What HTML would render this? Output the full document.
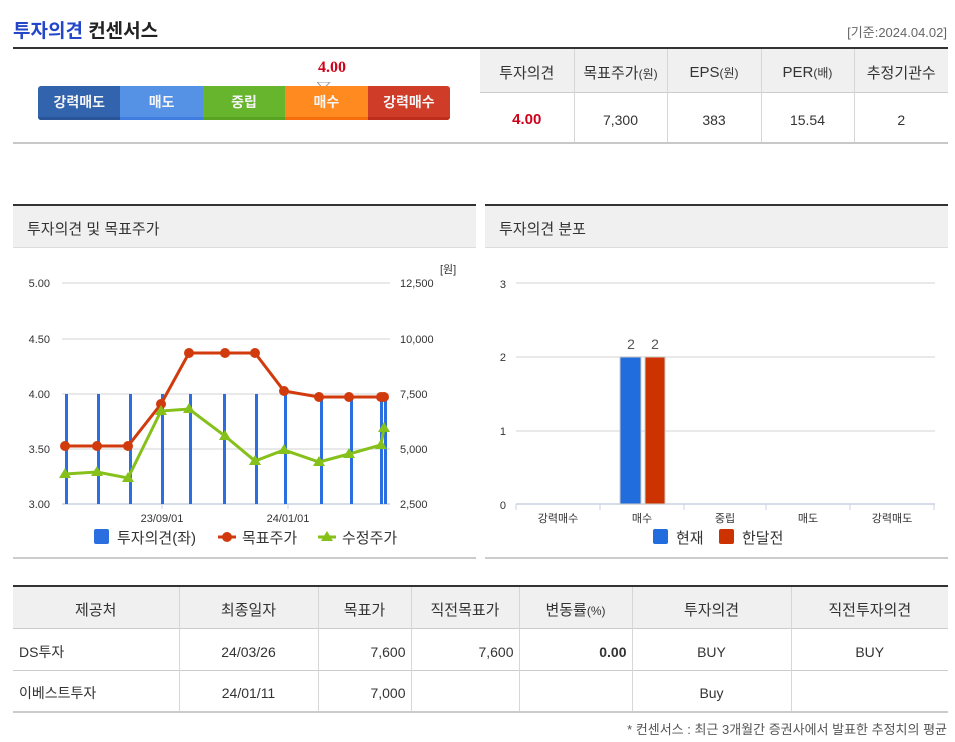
<!DOCTYPE html>
<html><head><meta charset="utf-8"><style>
*{margin:0;padding:0;box-sizing:border-box}
body{width:955px;height:742px;background:#fff;font-family:"Liberation Sans","Noto Sans CJK KR",sans-serif;position:relative;overflow:hidden;color:#333}
.a{position:absolute}
table{border-collapse:collapse;position:absolute;font-size:14px;color:#333}
td{text-align:center;border-left:1px solid #d6d6d6}
td:first-child{border-left:none}
.d td{padding-top:5px}
</style></head><body>
<div class="a" style="left:13px;top:16px;font-size:19px;font-weight:bold;color:#222"><span style="color:#2446c9">투자의견</span> 컨센서스</div>
<div class="a" style="right:8px;top:22px;font-size:13px;color:#666">[기준:2024.04.02]</div>
<div class="a" style="left:13px;top:47px;width:935px;height:2px;background:#333"></div>
<div class="a" style="left:13px;top:142px;width:935px;height:2px;background:#c8c8c8"></div>
<div class="a" style="left:318px;top:59px;font-family:'Liberation Serif',serif;font-weight:bold;font-size:16px;color:#d0021b">4.00</div>
<svg class="a" style="left:317px;top:82px" width="14" height="9"><polygon points="0,0 13,0 6.5,7" fill="#fff" stroke="#999"/></svg>
<div class="a" style="left:38px;top:86px;width:412px;height:34px;border-radius:3px;overflow:hidden;display:flex;font-size:14px;font-weight:bold;color:#f4f4f4;line-height:32px;text-align:center">
<div style="flex:1;background:#3263ad;border-bottom:3px solid #2a5599">강력매도</div>
<div style="flex:1;background:#5592e6;border-bottom:3px solid #3f7de0">매도</div>
<div style="flex:1;background:#67b52c;border-bottom:3px solid #58a322">중립</div>
<div style="flex:1;background:#ff8a1f;border-bottom:3px solid #f76e0f">매수</div>
<div style="flex:1;background:#cf3d28;border-bottom:3px solid #bd2f1c">강력매수</div>
</div>
<table style="left:480px;top:49px;width:468px">
<tr style="height:43px;background:#f0f0f0;font-size:15px;border-bottom:1px solid #ccc"><td style="width:94px;padding-top:4px">투자의견</td><td style="width:93px;padding-top:4px">목표주가<span style="font-size:12px">(원)</span></td><td style="width:94px;padding-top:4px">EPS<span style="font-size:12px">(원)</span></td><td style="width:93px;padding-top:4px">PER<span style="font-size:12px">(배)</span></td><td style="padding-top:4px">추정기관수</td></tr>
<tr style="height:50px" class="d"><td style="color:#d0021b;font-weight:bold;font-size:15px">4.00</td><td>7,300</td><td>383</td><td>15.54</td><td>2</td></tr>
</table>

<div class="a" style="left:13px;top:204px;width:463px;height:2px;background:#333"></div>
<div class="a" style="left:13px;top:206px;width:463px;height:42px;background:#f0f0f0;border-bottom:1px solid #ddd;font-size:15px;padding:12px 0 0 14px">투자의견 및 목표주가</div>
<div class="a" style="left:13px;top:557px;width:463px;height:2px;background:#ccc"></div>
<div class="a" style="left:485px;top:204px;width:463px;height:2px;background:#333"></div>
<div class="a" style="left:485px;top:206px;width:463px;height:42px;background:#f0f0f0;border-bottom:1px solid #ddd;font-size:15px;padding:12px 0 0 14px">투자의견 분포</div>
<div class="a" style="left:485px;top:557px;width:463px;height:2px;background:#ccc"></div>

<svg class="a" style="left:0;top:255px" width="480" height="300" font-family="Liberation Sans, Noto Sans CJK KR, sans-serif" font-size="11" fill="#333">
<g transform="translate(0,-255)">
<g stroke="#e2e2e2" stroke-width="1.5"><line x1="62" y1="283" x2="390" y2="283"/><line x1="62" y1="339" x2="390" y2="339"/><line x1="62" y1="394" x2="390" y2="394"/><line x1="62" y1="449" x2="390" y2="449"/></g>
<line x1="62" y1="504" x2="390" y2="504" stroke="#c8d2e0" stroke-width="1.5"/>
<line x1="162" y1="504" x2="162" y2="509" stroke="#c8d2e0"/><line x1="288" y1="504" x2="288" y2="509" stroke="#c8d2e0"/>
<g text-anchor="end"><text x="50" y="287">5.00</text><text x="50" y="343">4.50</text><text x="50" y="398">4.00</text><text x="50" y="453">3.50</text><text x="50" y="508">3.00</text></g>
<g><text x="400" y="287">12,500</text><text x="400" y="343">10,000</text><text x="400" y="398">7,500</text><text x="400" y="453">5,000</text><text x="400" y="508">2,500</text><text x="440" y="273">[원]</text></g>
<text x="162" y="522" text-anchor="middle">23/09/01</text><text x="288" y="522" text-anchor="middle">24/01/01</text>
<g fill="#2a6ee0"><rect x="65" y="394" width="3" height="110"/><rect x="97" y="394" width="3" height="110"/><rect x="129" y="394" width="3" height="110"/><rect x="161" y="394" width="3" height="110"/><rect x="189" y="394" width="3" height="110"/><rect x="223" y="394" width="3" height="110"/><rect x="255" y="394" width="3" height="110"/><rect x="284" y="394" width="3" height="110"/><rect x="320" y="394" width="3" height="110"/><rect x="350" y="394" width="3" height="110"/><rect x="380" y="394" width="3" height="110"/><rect x="384" y="394" width="3" height="110"/></g>
<polyline fill="none" stroke="#d03a0c" stroke-width="3" points="65,446 97,446 128,446 161,404 189,353 225,353 255,353 284,391 319,397 349,397 381,397 384,397"/>
<g fill="#d03a0c"><circle cx="65" cy="446" r="5"/><circle cx="97" cy="446" r="5"/><circle cx="128" cy="446" r="5"/><circle cx="161" cy="404" r="5"/><circle cx="189" cy="353" r="5"/><circle cx="225" cy="353" r="5"/><circle cx="255" cy="353" r="5"/><circle cx="284" cy="391" r="5"/><circle cx="319" cy="397" r="5"/><circle cx="349" cy="397" r="5"/><circle cx="381" cy="397" r="5"/><circle cx="384" cy="397" r="5"/></g>
<polyline fill="none" stroke="#86c01a" stroke-width="3" points="65,474 97,472 128,478 161,411 189,409 225,436 255,461 284,450 319,462 349,454 381,445 384,428"/>
<g fill="#86c01a"><polygon points="65,468 71,478 59,478"/><polygon points="97,466 103,476 91,476"/><polygon points="128,472 134,482 122,482"/><polygon points="161,405 167,415 155,415"/><polygon points="189,403 195,413 183,413"/><polygon points="225,430 231,440 219,440"/><polygon points="255,455 261,465 249,465"/><polygon points="284,444 290,454 278,454"/><polygon points="319,456 325,466 313,466"/><polygon points="349,448 355,458 343,458"/><polygon points="381,439 387,449 375,449"/><polygon points="384,422 390,432 378,432"/></g>
<rect x="94" y="529" width="15" height="15" rx="2" fill="#2a6ee0"/><text x="117" y="543" font-size="15">투자의견(좌)</text>
<line x1="218" y1="537" x2="236" y2="537" stroke="#d03a0c" stroke-width="3"/><circle cx="227" cy="537" r="5" fill="#d03a0c"/><text x="242" y="543" font-size="15">목표주가</text>
<line x1="318" y1="537" x2="336" y2="537" stroke="#86c01a" stroke-width="3"/><polygon points="327,531 333,541 321,541" fill="#86c01a"/><text x="342" y="543" font-size="15">수정주가</text>
</g></svg>

<svg class="a" style="left:480px;top:255px" width="475" height="300" font-family="Liberation Sans, Noto Sans CJK KR, sans-serif" font-size="11" fill="#333">
<g transform="translate(-480,-255)">
<g stroke="#e2e2e2" stroke-width="1.5"><line x1="516" y1="283" x2="935" y2="283"/><line x1="516" y1="357" x2="935" y2="357"/><line x1="516" y1="431" x2="935" y2="431"/></g>
<line x1="516" y1="504" x2="935" y2="504" stroke="#c8d2e0" stroke-width="1.5"/>
<g stroke="#c8d2e0"><line x1="516" y1="504" x2="516" y2="510"/><line x1="600" y1="504" x2="600" y2="510"/><line x1="684" y1="504" x2="684" y2="510"/><line x1="766" y1="504" x2="766" y2="510"/><line x1="850" y1="504" x2="850" y2="510"/><line x1="934" y1="504" x2="934" y2="510"/></g>
<g text-anchor="end"><text x="506" y="288">3</text><text x="506" y="361">2</text><text x="506" y="435">1</text><text x="506" y="509">0</text></g>
<rect x="620" y="357" width="21" height="147" fill="#226ddd" stroke="#ccc"/><rect x="645" y="357" width="20" height="147" fill="#cc3300" stroke="#ccc"/>
<text x="631" y="349" text-anchor="middle" font-size="14" fill="#555">2</text><text x="655" y="349" text-anchor="middle" font-size="14" fill="#555">2</text>
<g text-anchor="middle"><text x="558" y="522">강력매수</text><text x="642" y="522">매수</text><text x="725" y="522">중립</text><text x="808" y="522">매도</text><text x="892" y="522">강력매도</text></g>
<rect x="653" y="529" width="15" height="15" rx="2" fill="#226ddd"/><text x="676" y="543" font-size="15">현재</text>
<rect x="719" y="529" width="15" height="15" rx="2" fill="#cc3300"/><text x="742" y="543" font-size="15">한달전</text>
</g></svg>

<div class="a" style="left:13px;top:585px;width:935px;height:2px;background:#333"></div>
<table style="left:13px;top:587px;width:935px">
<tr style="height:41px;background:#f0f0f0;font-size:15px;border-bottom:1px solid #ccc" class="d"><td style="width:166px">제공처</td><td style="width:139px">최종일자</td><td style="width:93px">목표가</td><td style="width:108px">직전목표가</td><td style="width:113px">변동률<span style="font-size:12px">(%)</span></td><td style="width:159px">투자의견</td><td>직전투자의견</td></tr>
<tr style="height:42px;border-bottom:1px solid #ccc" class="d"><td style="text-align:left;padding-left:6px">DS투자</td><td>24/03/26</td><td style="text-align:right;padding-right:5px">7,600</td><td style="text-align:right;padding-right:5px">7,600</td><td style="text-align:right;padding-right:5px;font-weight:bold">0.00</td><td>BUY</td><td>BUY</td></tr>
<tr style="height:42px;border-bottom:2px solid #ccc" class="d"><td style="text-align:left;padding-left:6px">이베스트투자</td><td>24/01/11</td><td style="text-align:right;padding-right:5px">7,000</td><td></td><td></td><td>Buy</td><td></td></tr>
</table>
<div class="a" style="right:8px;top:719px;font-size:13px;color:#555">* 컨센서스 : 최근 3개월간 증권사에서 발표한 추정치의 평균</div>
</body></html>
